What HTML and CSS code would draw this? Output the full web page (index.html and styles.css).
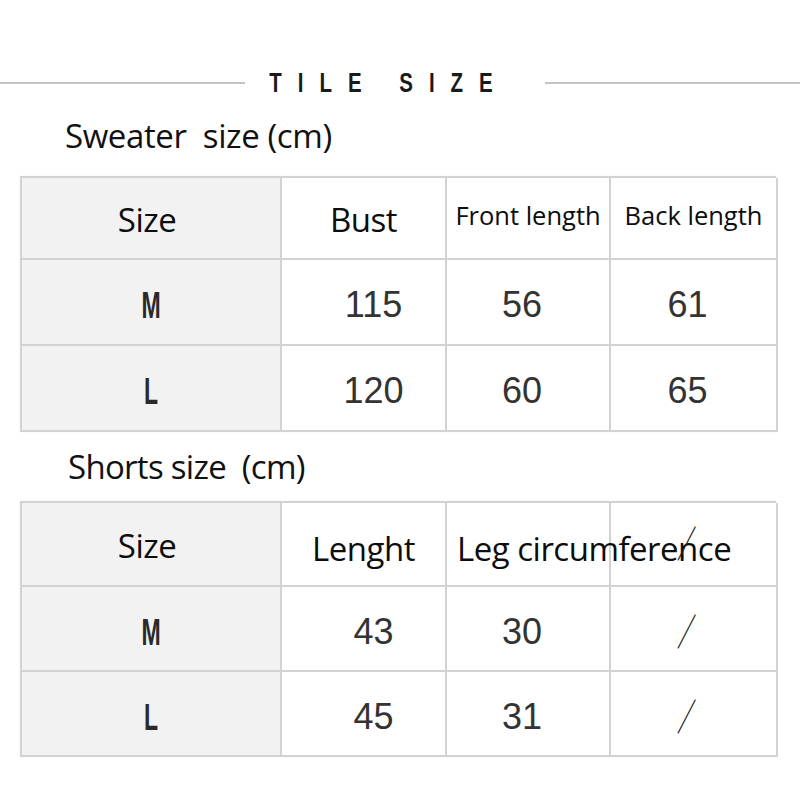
FILE: index.html
```html
<!DOCTYPE html>
<html>
<head>
<meta charset="utf-8">
<link rel="stylesheet" href="styles.css">
</head>
<body>
<div class="page">
  <div class="banner">
    <div class="rule rule-left"></div>
    <div class="banner-text">TILE SIZE</div>
    <div class="rule rule-right"></div>
  </div>

  <div class="title title-sweater">Sweater&nbsp; size (cm)</div>
  <div class="grid grid-sweater">
    <div class="cell col1 head"><span class="hd sz">Size</span></div>
    <div class="cell head"><span class="hd">Bust</span></div>
    <div class="cell head"><span class="hd small">Front length</span></div>
    <div class="cell head"><span class="hd small">Back length</span></div>

    <div class="cell col1 row"><span class="letter">M</span></div>
    <div class="cell row"><span class="num shift">115</span></div>
    <div class="cell row"><span class="num shift-l">56</span></div>
    <div class="cell row"><span class="num shift-l">61</span></div>

    <div class="cell col1 row"><span class="letter">L</span></div>
    <div class="cell row"><span class="num shift">120</span></div>
    <div class="cell row"><span class="num shift-l">60</span></div>
    <div class="cell row"><span class="num shift-l">65</span></div>
  </div>

  <div class="title title-shorts">Shorts size&nbsp; (cm)</div>
  <div class="grid grid-shorts">
    <div class="cell col1 head2"><span class="hd sz">Size</span></div>
    <div class="cell head2"><span class="hd low">Lenght</span></div>
    <div class="cell head2 left"><span class="hd low nowrap">Leg circumference</span></div>
    <div class="cell head2"><span class="slash up">／</span></div>

    <div class="cell col1 row2"><span class="letter">M</span></div>
    <div class="cell row2"><span class="num shift">43</span></div>
    <div class="cell row2"><span class="num shift-l">30</span></div>
    <div class="cell row2"><span class="slash">／</span></div>

    <div class="cell col1 row2"><span class="letter">L</span></div>
    <div class="cell row2"><span class="num shift">45</span></div>
    <div class="cell row2"><span class="num shift-l">31</span></div>
    <div class="cell row2"><span class="slash">／</span></div>
  </div>
</div>
</body>
</html>
```

FILE: styles.css
```css
html, body {
  margin: 0;
  padding: 0;
  background: #ffffff;
}

.page {
  width: 800px;
  height: 800px;
  overflow: hidden;
  font-family: "Open Sans", "Noto Sans", sans-serif;
  color: #111;
}

.banner {
  display: flex;
  align-items: center;
  padding-top: 67px;
  height: 32px;
}

.rule {
  height: 2px;
  background: #c4c4c4;
}

.rule-left {
  width: 245px;
}

.rule-right {
  flex: 1;
}

.banner-text {
  width: 300px;
  padding-left: 32px;
  box-sizing: border-box;
  font-family: "Liberation Sans", Arial, sans-serif;
  font-size: 27px;
  font-weight: 700;
  letter-spacing: 21px;
  color: #1a1a1a;
  line-height: 32px;
  transform: scaleX(0.76);
  transform-origin: left center;
  white-space: nowrap;
}

.title {
  font-size: 33px;
  letter-spacing: -0.4px;
  line-height: 40px;
  color: #111;
  white-space: nowrap;
}

.title-sweater {
  padding-left: 65px;
  margin-top: 17px;
  height: 60px;
}

.title-shorts {
  padding-left: 68px;
  margin-top: 15px;
  height: 54px;
  letter-spacing: -0.7px;
}

.grid {
  display: grid;
  grid-template-columns: 260px 165px 164px 167px;
  margin-left: 20px;
  width: 756px;
  border-top: 2px solid #d2d2d2;
  border-left: 2px solid #d2d2d2;
  box-sizing: border-box;
  box-shadow: 0 0 2px rgba(0,0,0,0.06);
}

.grid-sweater {
  grid-template-rows: 82px 86px 86px;
}

.grid-shorts {
  grid-template-rows: 84px 85px 85px;
}

.cell {
  display: flex;
  align-items: center;
  justify-content: center;
  border-right: 2px solid #d2d2d2;
  border-bottom: 2px solid #d2d2d2;
  box-sizing: border-box;
  min-width: 0;
  overflow: visible;
  position: relative;
}

.col1 {
  background: #f2f2f2;
}

.left {
  justify-content: flex-start;
  padding-left: 10px;
}

.hd {
  font-size: 33px;
  letter-spacing: -0.5px;
  color: #0d0d0d;
  line-height: 1;
  position: relative;
  top: 1px;
}

.hd.sz {
  left: -4px;
}

.hd.small {
  font-size: 25.5px;
  letter-spacing: 0;
  top: -2px;
}

.hd.low {
  top: 4px;
}

.nowrap {
  white-space: nowrap;
  position: relative;
  z-index: 1;
}

.num {
  font-family: "Liberation Sans", Arial, sans-serif;
  font-size: 36px;
  color: #333;
  line-height: 1;
  position: relative;
  top: 3px;
}

.shift {
  left: 10px;
}

.shift-l {
  left: -6px;
}

.letter {
  display: inline-block;
  font-family: "Liberation Sans", Arial, sans-serif;
  font-size: 36px;
  font-weight: 700;
  color: #2a2a2a;
  line-height: 1;
  transform: scaleX(0.64);
  position: relative;
  top: 4px;
  left: 0;
}

.slash {
  display: inline-block;
  font-family: "Noto Sans CJK SC", sans-serif;
  font-weight: 700;
  font-size: 37px;
  color: #222;
  line-height: 1;
  transform: scaleX(0.52);
  position: relative;
  left: -7px;
  top: 2px;
  z-index: 2;
}

.slash.up {
  top: -2px;
}
```
